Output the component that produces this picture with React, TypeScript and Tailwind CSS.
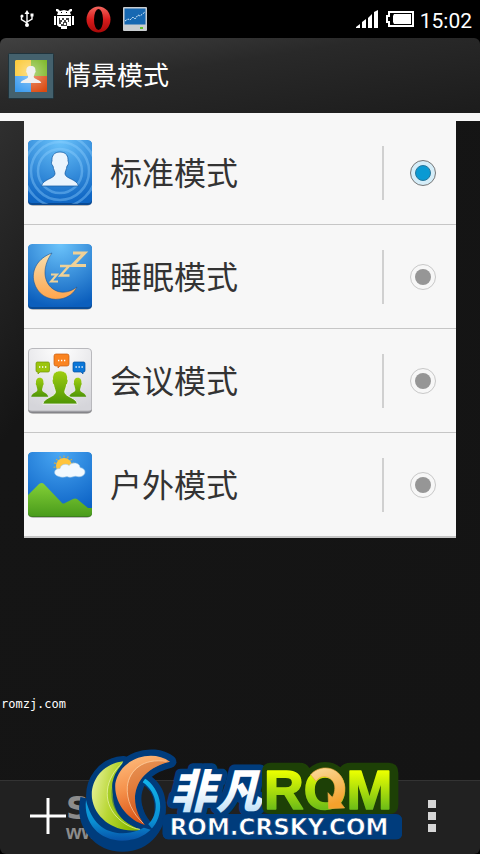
import React, { useState } from 'react';

interface Profile {
  id: string;
  name: string;
  icon: React.ReactNode;
}

// Rounded 64px tile with a soft bottom edge, shared by all profile icons
function Tile({ id, top, bottom, edge, children }: { id: string; top: string; bottom: string; edge: string; children: React.ReactNode }) {
  return (
    <svg viewBox="0 0 64 66" className="h-[66px] w-16 shrink-0" aria-hidden="true">
      <defs>
        <radialGradient id={id} cx="0.5" cy="0" r="1">
          <stop offset="0" stopColor={top} />
          <stop offset="1" stopColor={bottom} />
        </radialGradient>
        <clipPath id={`${id}-clip`}>
          <rect width="64" height="64" rx="4" />
        </clipPath>
      </defs>
      <rect y="2" width="64" height="64" rx="5" fill="#000" opacity="0.25" />
      <rect y="1" width="64" height="64" rx="4" fill={edge} />
      <g clipPath={`url(#${id}-clip)`}>
        <rect width="64" height="63" rx="4" fill={`url(#${id})`} />
        {children}
      </g>
    </svg>
  );
}

const PERSON = 'M32 12c-6 0-8.500 4-8 9-1 1-.5 4 1 5 .5 4 2 5 2 8-1 5-12 5-13.500 12h37c-1.500-7-12.500-7-13.500-12 0-3 1.500-4 2-8 1.500-1 2-4 1-5 .5-5-2-9-8-9z';

function StandardIcon() {
  return (
    <Tile id="std" top="#6cc4fb" bottom="#0f66c4" edge="#094a94">
      <g fill="none" stroke="#8fd0ff" strokeOpacity="0.4" strokeWidth="2.500">
        <circle cx="32" cy="31" r="22" />
        <circle cx="32" cy="31" r="29" />
        <circle cx="32" cy="31" r="36" />
      </g>
      <path d={PERSON} fill="#eaf4fd" stroke="#1c62a8" strokeWidth="0.8" />
    </Tile>
  );
}

function SleepIcon() {
  return (
    <Tile id="sleep" top="#6cc4fb" bottom="#0c5fbd" edge="#094a94">
      <defs>
        <linearGradient id="moon" x1="0" y1="0" x2="0" y2="1">
          <stop offset="0" stopColor="#f6dfae" />
          <stop offset="1" stopColor="#ffa54c" />
        </linearGradient>
      </defs>
      <path d="M24 9C10 14 3 26 6 38c3 12 14 19 26 17 8-1 14-6 17-12-8 6-17 7-24 2-11-8-10-24-1-36z" fill="url(#moon)" stroke="#1a5598" strokeWidth="0.6" />
      <g fill="none" stroke="#efd197">
        <path d="M23 30.500h6l-6 7h7" strokeWidth="2" />
        <path d="M32 22h9l-8.500 9.500h9" strokeWidth="2.400" />
        <path d="M45 9h11.500L44.500 21.500H58" strokeWidth="3.200" />
      </g>
    </Tile>
  );
}

function MeetingIcon() {
  return (
    <Tile id="meet" top="#ffffff" bottom="#d5d5da" edge="#85858a">
      <defs>
        <linearGradient id="people" x1="0" y1="0" x2="0" y2="1">
          <stop offset="0" stopColor="#9fce10" />
          <stop offset="1" stopColor="#4f9606" />
        </linearGradient>
      </defs>
      <path d="M.5 4A3.500 3.500 0 0 1 4 .5h56A3.500 3.500 0 0 1 63.500 4v59H.5z" fill="none" stroke="#b9b9bd" />
      <g fill="url(#people)">
        <path transform="translate(-3 23) scale(.46 .56)" d={PERSON} />
        <path transform="translate(35 23) scale(.46 .56)" d={PERSON} />
        <path transform="translate(2 11) scale(.94 .98)" d={PERSON} stroke="#f2f2f2" strokeWidth="1" />
      </g>
      <path d="M9 14h11a1.500 1.500 0 0 1 1.500 1.500v7A1.500 1.500 0 0 1 20 24h-8l-2 2v-2H9a1.500 1.500 0 0 1-1-1.500v-7A1.500 1.500 0 0 1 9 14z" fill="#9cc50d" stroke="#709406" strokeWidth="0.7" />
      <path d="M28 6h11a2 2 0 0 1 2 2v8a2 2 0 0 1-2 2h-7l-2 2v-2h-2a2 2 0 0 1-2-2V8a2 2 0 0 1 2-2z" fill="#fa8421" stroke="#c95c10" strokeWidth="0.7" />
      <path d="M46 14h10a1.500 1.500 0 0 1 1 1.500v7a1.500 1.500 0 0 1-1 1.500h-1v2l-2-2h-7a1.500 1.500 0 0 1-1-1.500v-7a1.500 1.500 0 0 1 1-1.500z" fill="#0a76d8" stroke="#06509e" strokeWidth="0.7" />
      <path d="M11 19h8M30 12.500h8M47.500 19h8" stroke="#fff" strokeWidth="1.300" strokeDasharray="1.300 1.700" />
    </Tile>
  );
}

function OutdoorIcon() {
  return (
    <Tile id="out" top="#4aa8f4" bottom="#0b61c4" edge="#3c7f1c">
      <defs>
        <linearGradient id="hill" x1="0" y1="0" x2="0" y2="1">
          <stop offset="0" stopColor="#83cf36" />
          <stop offset="1" stopColor="#4a9c1c" />
        </linearGradient>
      </defs>
      <path d="M0 43l11-11q3-2 5 0l18 19q1 1 3 0l8-4q2-1 4 0l11 9h4v8H0z" fill="url(#hill)" />
      <circle cx="36" cy="14" r="9.500" fill="none" stroke="#dcae3e" strokeWidth="2" strokeDasharray="1 3" />
      <circle cx="36" cy="14" r="8" fill="#ffc53d" />
      <path d="M31 24.500c-6-1-6-8 1-8 1-5 7-5 9-3 3-4 11-3 11 2 7 1 6 8 1 9-3 1-5-1-7 0-3 1-5 1-7 0-3 1-6 1-8 0z" fill="#f2f9fe" stroke="#9ec8e8" strokeWidth="0.6" />
    </Tile>
  );
}

const profiles: Profile[] = [
  { id: 'standard', name: '标准模式', icon: <StandardIcon /> },
  { id: 'sleep', name: '睡眠模式', icon: <SleepIcon /> },
  { id: 'meeting', name: '会议模式', icon: <MeetingIcon /> },
  { id: 'outdoor', name: '户外模式', icon: <OutdoorIcon /> },
];

function StatusBar() {
  return (
    <div className="flex h-[38px] items-center justify-between bg-black pr-2 pl-5 text-white">
      <div className="flex items-center">
        <svg viewBox="0 0 14 18" className="mr-5 h-[18px] w-3.5" fill="none" stroke="#fff" strokeWidth="1.400" aria-label="USB">
          <path d="M7 3v11M7 13L1.500 9.500V6M7 12l5-3V5" />
          <path d="M7 0l2.500 4h-5z" fill="#fff" stroke="none" />
          <circle cx="7" cy="15" r="2" fill="#fff" stroke="none" />
          <circle cx="2" cy="6" r="1.500" fill="#fff" stroke="none" />
          <path d="M10.500 3.500h3v3h-3z" fill="#fff" stroke="none" />
        </svg>
        <svg viewBox="0 0 20 20" className="mr-3 size-5" fill="#fff" aria-label="Android">
          <path d="M2 0h2l2 2 4-1 4 1 2-2h2v2l-2 1 1 3H3l1-3-2-1zM0 7h2v9H0zM18 7h2v9h-2zM3 7h14v10h-4v3H7v-2H5l-2-2z" />
          <path d="M5 9h10v4h-2v4H7v-2H5z" fill="#444" />
          <path d="M6 9h2v2H6zM10 9h2v2h-2zM8 11h2v2H8zM12 11h2v2h-2zM7 13h2v2H7zM10 14h2v2h-2z" />
          <path d="M7 3h1v1H7zM12 3h1v1h-1z" fill="#000" />
        </svg>
        <svg viewBox="0 0 25 27" className="mr-3 h-[27px] w-[25px]" aria-label="Opera">
          <defs>
            <linearGradient id="opera" x1="0" y1="0" x2="0" y2="1">
              <stop offset="0" stopColor="#f4675f" />
              <stop offset="0.5" stopColor="#d81c1c" />
              <stop offset="1" stopColor="#a80808" />
            </linearGradient>
          </defs>
          <ellipse cx="12.500" cy="13.500" rx="12" ry="13" fill="url(#opera)" />
          <ellipse cx="12.500" cy="13.500" rx="4.500" ry="10.500" />
        </svg>
        <svg viewBox="0 0 24 24" className="size-6" aria-label="Monitor">
          <rect width="24" height="24" rx="1" fill="#c9cdd0" />
          <rect x="1.500" y="1.500" width="21" height="16" fill="#1668b2" />
          <path d="M2 14l3-2 2 1 3-3 2 2 3-4 2 1 5-4" fill="none" stroke="#d5ecfb" strokeDasharray="2 1" />
          <path d="M17 20h3v2h-3z" fill="#63bf2c" />
        </svg>
      </div>
      <div className="flex items-center">
        <svg viewBox="0 0 22 18" className="mr-2 h-[18px] w-[22px]" fill="#fff" aria-label="Signal">
          <path d="M0 18v-1l4-3v4zM6 18v-6l4-3v9zM12 18V8l4-4v14zM18 18V2l4-2v18z" />
        </svg>
        <svg viewBox="0 0 28 16" className="mr-1.5 h-4 w-7" aria-label="Battery">
          <path d="M3 1h24v14H3v-4H1V5h2z" fill="none" stroke="#fff" strokeWidth="2" />
          <path d="M8 3h17v10H8l-1-2V5z" fill="#fff" />
        </svg>
        <span className="pt-1 font-[Roboto,sans-serif] text-[21px] leading-7">15:02</span>
      </div>
    </div>
  );
}

function Header() {
  return (
    <header className="flex h-[75px] items-center gap-[11px] rounded-t-md bg-linear-to-br from-[#414141] via-[#292929] via-40% to-[#1c1c1c] pl-2">
      <svg viewBox="0 0 46 46" className="size-[46px]" aria-hidden="true">
        <defs>
          <radialGradient id="quad-shine" cx="0.5" cy="0.4" r="0.7">
            <stop offset="0" stopColor="#fff" stopOpacity="0.450" />
            <stop offset="1" stopColor="#fff" stopOpacity="0" />
          </radialGradient>
        </defs>
        <rect x="0.500" y="0.500" width="45" height="45" rx="1" fill="#44616d" stroke="#20343d" />
        <path d="M8 7h15v16H7V8z" fill="#fbc72f" />
        <path d="M23 7h16v16H23z" fill="#78b51e" />
        <path d="M7 23h16v16H7z" fill="#3b9cf0" />
        <path d="M23 23h16v16H23z" fill="#dc4a10" />
        <path d="M7 7h32v32H7z" fill="url(#quad-shine)" />
        <path transform="translate(5 7) scale(.56 .5)" d={PERSON} fill="#f0f0f0" />
      </svg>
      <h1 className="pb-1 text-[26px] leading-8 text-white">情景模式</h1>
    </header>
  );
}

function BrandLogo() {
  return (
    <svg viewBox="0 0 1020 342" className="pointer-events-none absolute bottom-0 left-[70px] h-[114px] w-[340px]" aria-label="非凡ROM">
      <defs>
        <linearGradient id="lime" x1="0" y1="0" x2="1" y2="0.300">
          <stop offset="0" stopColor="#edf5a8" />
          <stop offset="0.500" stopColor="#b8d633" />
          <stop offset="1" stopColor="#86b800" />
        </linearGradient>
        <linearGradient id="orange" x1="0" y1="0" x2="0.300" y2="1">
          <stop offset="0" stopColor="#ffc184" />
          <stop offset="0.500" stopColor="#f5914b" />
          <stop offset="1" stopColor="#d95214" />
        </linearGradient>
        <linearGradient id="cyan" x1="0" y1="0" x2="0" y2="1">
          <stop offset="0" stopColor="#12b5ec" />
          <stop offset="0.700" stopColor="#0a8ed2" />
          <stop offset="1" stopColor="#0752a8" />
        </linearGradient>
        <linearGradient id="ice" x1="0" y1="0" x2="0" y2="1">
          <stop offset="0.500" stopColor="#ffffff" />
          <stop offset="1" stopColor="#a9d6f6" />
        </linearGradient>
        <linearGradient id="rom" x1="0" y1="0" x2="0" y2="1">
          <stop offset="0.200" stopColor="#eaff00" />
          <stop offset="0.800" stopColor="#6fbd17" />
        </linearGradient>
        <linearGradient id="arrow" x1="0" y1="0" x2="0.300" y2="1">
          <stop offset="0" stopColor="#fbdc9c" />
          <stop offset="1" stopColor="#f3a12c" />
        </linearGradient>
      </defs>
      <g fill="#003c7c" stroke="#003c7c" strokeLinejoin="round">
        <path d="M48 175C30 255 85 318 158 318s120-62 112-130c-3-32-22-58-50-74" fill="none" strokeWidth="34" />
        <path d="M160 65C95 70 60 125 66 180c8 60 60 104 154 90z" strokeWidth="34" />
        <path d="M300 65C245 25 150 55 136 130c-5 60 40 110 89 125-50-60-45-160 75-190z" strokeWidth="38" />
        <rect x="285" y="229" width="704" height="62" rx="10" strokeWidth="14" />
      </g>
      <path d="M48 180c-8 70 40 122 110 122s118-50 112-112c-3-30-22-62-48-76l-5 12c24 16 38 40 40 66 4 50-36 86-98 88-58 0-96-36-111-100z" fill="url(#cyan)" />
      <path d="M160 64C100 70 60 120 66 175c8 62 74 108 146 94-75-25-125-95-52-205z" fill="url(#lime)" />
      <path d="M158 68c-55 50-60 115-20 160 20 22 44 36 72 40-75-25-110-95-52-200z" fill="#96c414" opacity="0.600" />
      <path d="M158 68c-55 50-60 115-20 160 20 22 44 36 72 40" fill="none" stroke="#f3f8bd" strokeWidth="2" />
      <path d="M300 65C245 25 150 55 136 130c-5 60 40 110 89 125-50-60-45-160 75-190z" fill="url(#orange)" stroke="#003c7c" strokeWidth="18" paintOrder="stroke" />
      <path d="M300 65c-70-15-120 20-128 75-3 40 15 85 53 115-50-60-45-160 75-190z" fill="#b7501c" opacity="0.300" />
      <path d="M290 64c-70-10-113 25-118 76-3 40 15 80 48 110" fill="none" stroke="#ffd9b0" strokeWidth="2" />
      <text x="299" y="204" fontSize="138" fontWeight="900" fontStyle="italic" fill="url(#ice)" stroke="#003c7c" strokeWidth="34" strokeLinejoin="round" paintOrder="stroke" className="font-['Noto_Sans_CJK_SC',sans-serif]">非凡</text>
      <path d="M604 68h84q22 0 30 16 20-18 47-18t46 16q8-14 32-14h112q30 0 30 30v96q0 28-28 28H602q-26 0-26-26V96q0-28 28-28z" fill="#1d4006" />
      <text x="582" y="207" fontSize="165" fontWeight="700" fill="url(#rom)" stroke="url(#rom)" strokeWidth="5" strokeLinejoin="round" className="font-['Liberation_Sans',sans-serif]">ROM</text>
      <path d="M722 104c20-24 60-28 84-4 24 26 24 60 6 88l12 16-48 2-2-48 13 14c16-28 6-60-24-62-12 0-20 6-25 14z" fill="url(#arrow)" stroke="#e9a640" strokeWidth="2" />
      <rect x="278" y="224" width="718" height="74" rx="16" fill="#003c7c" />
      <text x="299" y="285" fontSize="69" fontWeight="700" fill="#fff" stroke="#003c7c" strokeWidth="2" className="font-['DejaVu_Sans',sans-serif]">ROM.CRSKY.COM</text>
    </svg>
  );
}

function BottomBar() {
  return (
    <footer className="relative flex h-[74px] items-center justify-between rounded-b-md border-t border-[#333] bg-[#212121] pr-8 pb-1 pl-[30px]">
      <div className="flex items-center">
        <button type="button" aria-label="添加">
          <svg viewBox="0 0 36 36" className="size-9" stroke="#fff" strokeWidth="3" aria-hidden="true">
            <path d="M18 0v36M0 18h36" />
          </svg>
        </button>
        <div className="flex flex-col pt-1 font-['DejaVu_Sans',sans-serif] font-bold text-[#8c8c8c]">
          <span className="text-[32px] leading-7">S</span>
          <span className="font-['Liberation_Sans',sans-serif] text-xl leading-5">ww</span>
        </div>
      </div>
      <button type="button" aria-label="更多" className="flex w-8 flex-col items-center gap-1">
        <span className="size-2 bg-[#d6d6d6]" />
        <span className="size-2 bg-[#d6d6d6]" />
        <span className="size-2 bg-[#d6d6d6]" />
      </button>
      <BrandLogo />
    </footer>
  );
}

export default function App() {
  const [selected, setSelected] = useState('standard');

  return (
    <div className="flex min-h-screen flex-col bg-black font-['Noto_Sans_CJK_SC',sans-serif]">
      <StatusBar />
      <Header />
      <main className="flex flex-1 flex-col bg-linear-to-br from-[#303030] via-[#151515] via-25% to-[#141414]">
        <div className="h-2 bg-[#f7f7f7]" />
        <ul className="mx-6 border-b border-[#c6c6c6] bg-[#f7f7f7]">
          {profiles.map((profile) => (
            <li key={profile.id} className="border-b border-[#c6c6c6]">
              <label className="flex h-[103px] items-center pr-5 pl-1">
                {profile.icon}
                <span className="ml-[18px] flex-1 pb-1 text-[32px] leading-10 text-[#333]">{profile.name}</span>
                <span className="mr-[26px] h-[54px] w-0.5 bg-[#d0d0d0]" />
                <input
                  type="radio"
                  name="profile"
                  checked={selected === profile.id}
                  onChange={() => setSelected(profile.id)}
                  className="grid size-[26px] appearance-none place-items-center rounded-full border border-[#c8c8c8] before:size-4 before:rounded-full before:bg-[#969696] checked:border-[#777] checked:bg-[#d5edf8] checked:before:border checked:before:border-[#28779c] checked:before:bg-[#0a9ad3]"
                />
              </label>
            </li>
          ))}
        </ul>
        <p className="mt-auto mb-[68px] pl-px font-['DejaVu_Sans_Mono',monospace] text-xs leading-4 text-white">romzj.com</p>
      </main>
      <BottomBar />
    </div>
  );
}
